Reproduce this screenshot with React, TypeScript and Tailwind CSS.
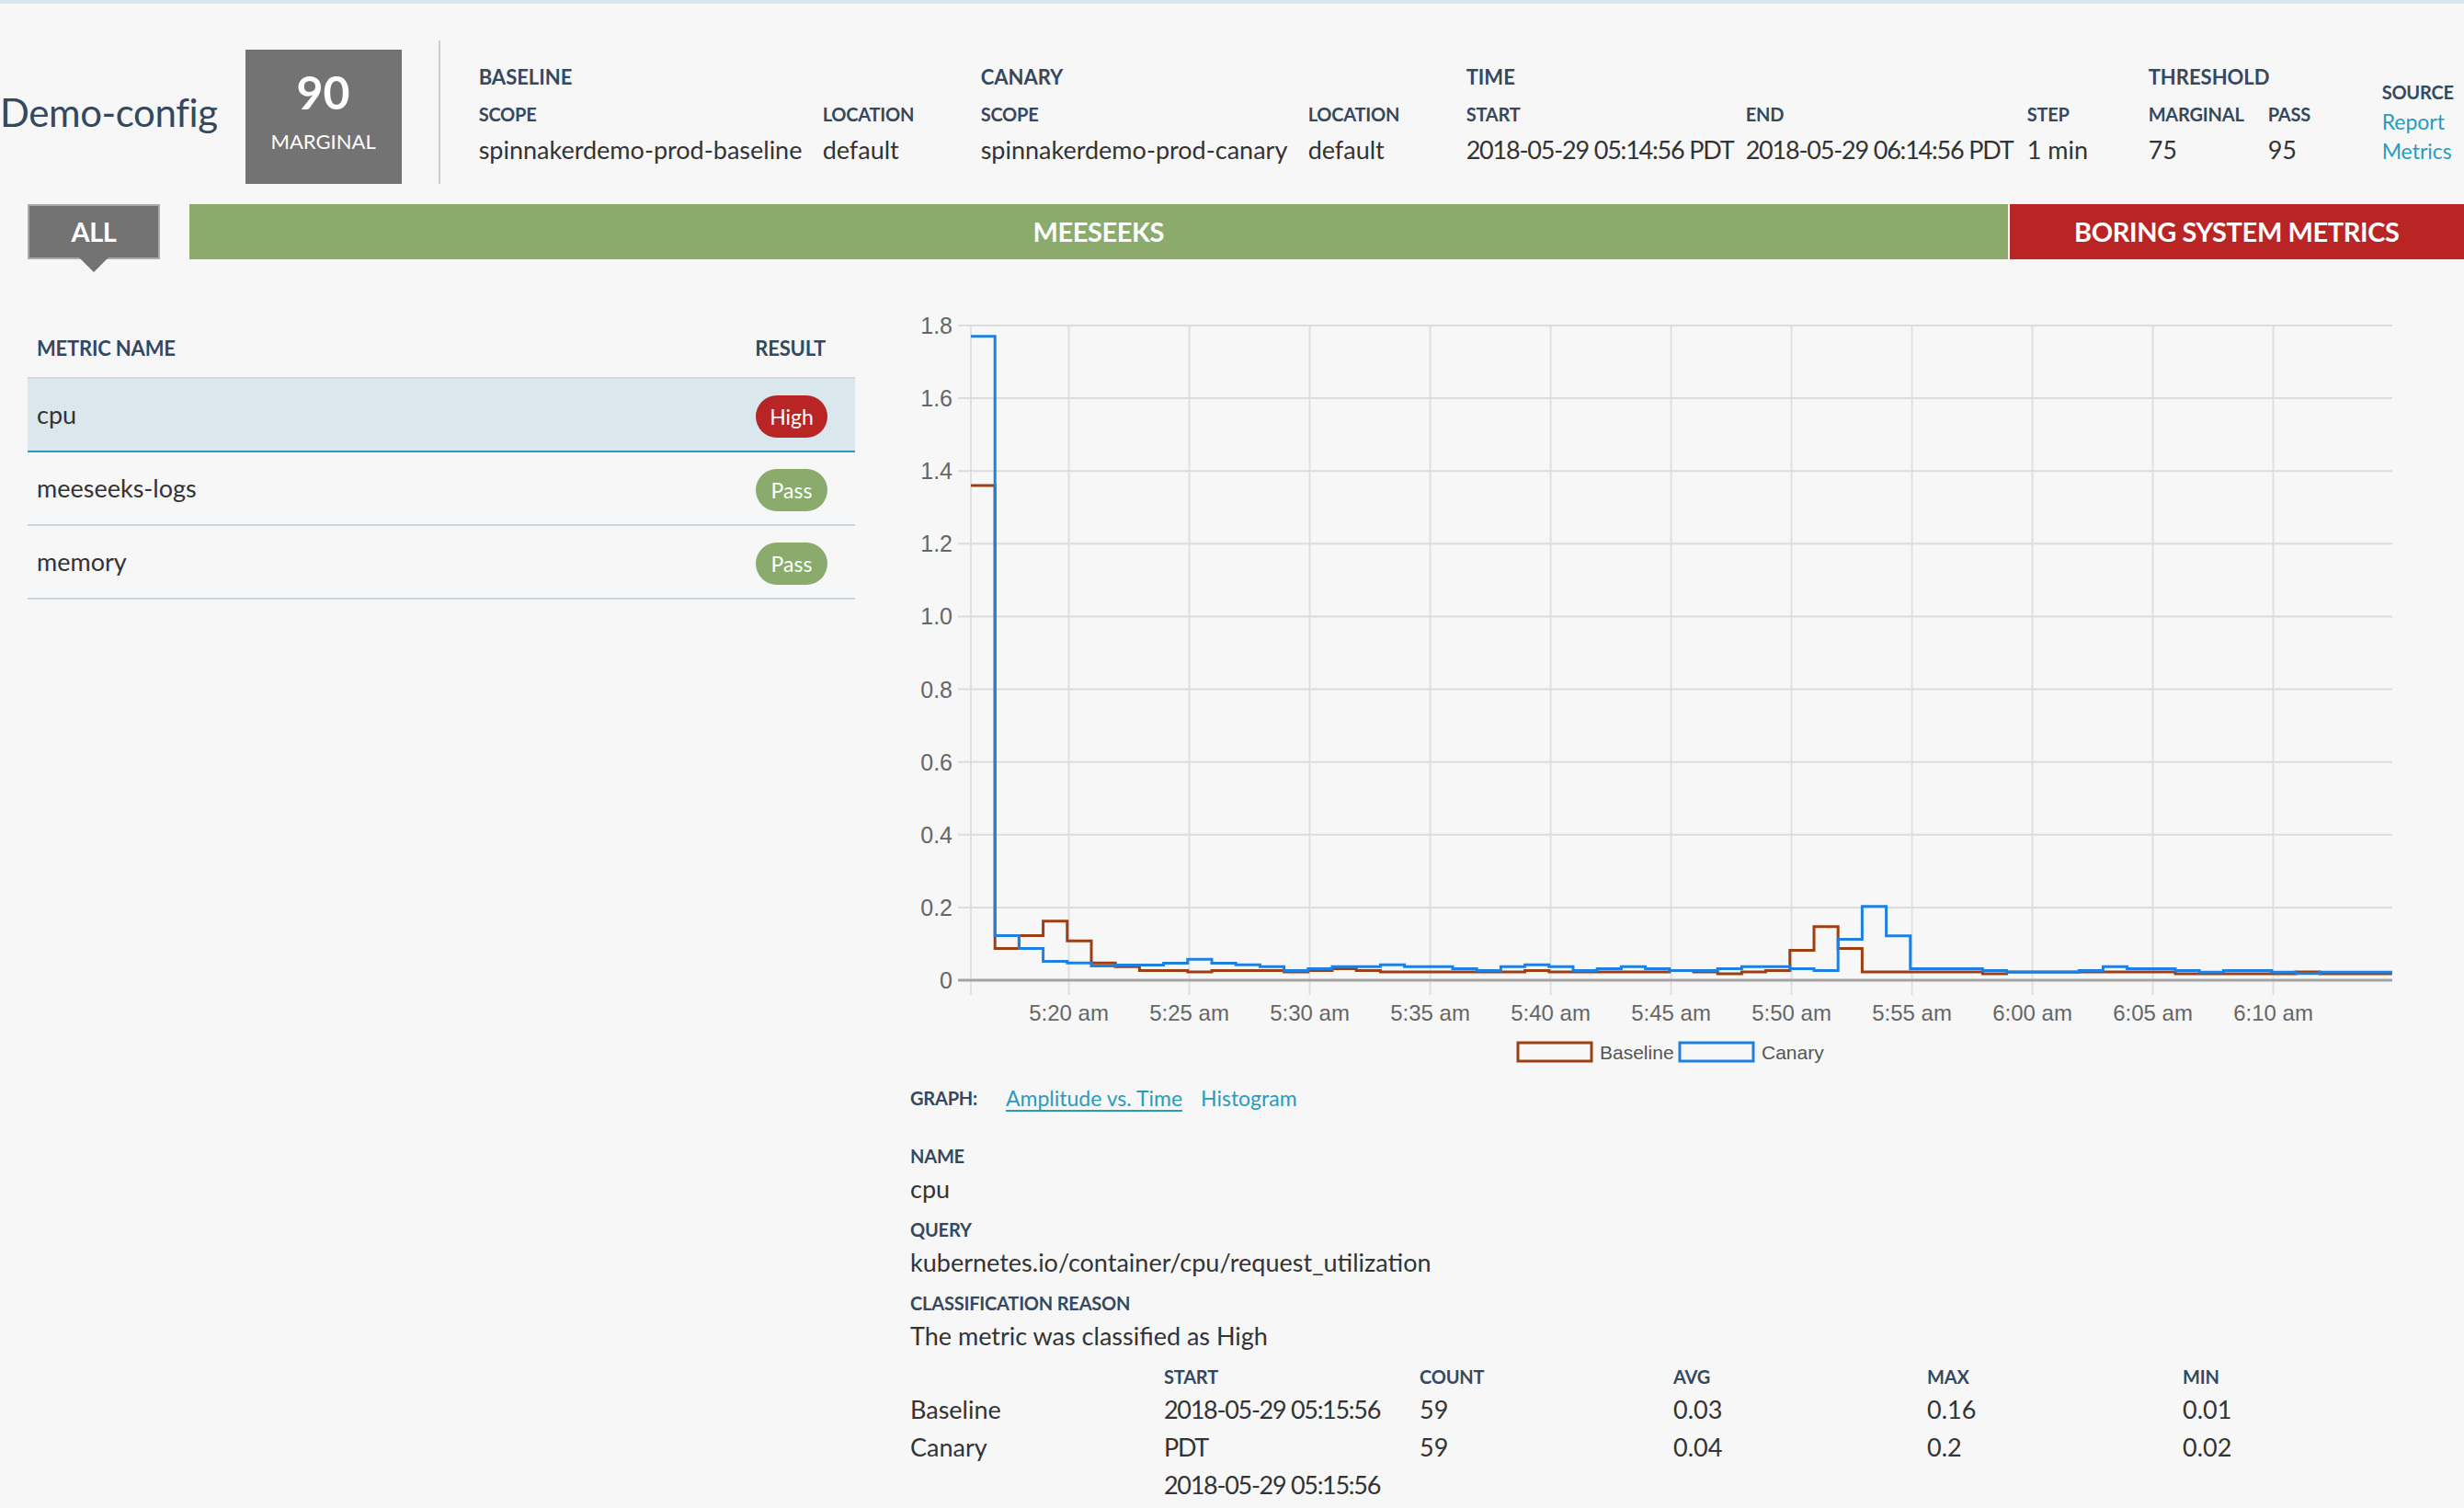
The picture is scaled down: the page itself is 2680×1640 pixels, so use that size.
import React from "react";

// one value per minute, starting 05:15:56
const baseline = [
  1.36, 0.0875, 0.1225, 0.1625, 0.108, 0.0475, 0.0375, 0.027, 0.027, 0.0225,
  0.027, 0.027, 0.027, 0.0225, 0.027, 0.032, 0.027, 0.0225, 0.0225, 0.0225,
  0.0225, 0.0225, 0.0225, 0.027, 0.0225, 0.0225, 0.0225, 0.0225, 0.0225, 0.027,
  0.0225, 0.0175, 0.0225, 0.027, 0.082, 0.147, 0.0875, 0.0225, 0.0225, 0.0225,
  0.0225, 0.0225, 0.0175, 0.0225, 0.0225, 0.0225, 0.0225, 0.0225, 0.0225, 0.0225,
  0.0175, 0.0175, 0.0175, 0.0175, 0.0175, 0.0225, 0.0175, 0.0175, 0.0175,
];

const canary = [
  1.77, 0.1225, 0.0875, 0.052, 0.0475, 0.039, 0.042, 0.042, 0.047, 0.0575,
  0.047, 0.0425, 0.0375, 0.027, 0.032, 0.0375, 0.0375, 0.0425, 0.0375, 0.0375,
  0.032, 0.027, 0.0375, 0.0425, 0.0375, 0.027, 0.032, 0.0375, 0.032, 0.027,
  0.027, 0.032, 0.0375, 0.0375, 0.032, 0.027, 0.112, 0.2025, 0.122, 0.032,
  0.032, 0.032, 0.027, 0.022, 0.022, 0.022, 0.027, 0.0375, 0.032, 0.032,
  0.027, 0.022, 0.027, 0.027, 0.022, 0.018, 0.022, 0.022, 0.022,
];

const ticks = ["5:20 am", "5:25 am", "5:30 am", "5:35 am", "5:40 am", "5:45 am", "5:50 am", "5:55 am", "6:00 am", "6:05 am", "6:10 am"];
const yTicks = [1.8, 1.6, 1.4, 1.2, 1.0, 0.8, 0.6, 0.4, 0.2];

const metrics = [
  { name: "cpu", result: "High", selected: true },
  { name: "meeseeks-logs", result: "Pass", selected: false },
  { name: "memory", result: "Pass", selected: false },
];

// small caps-style field labels
const Label = ({ children, className = "" }: { children: React.ReactNode; className?: string }) => (
  <div className={`text-[10px] font-bold uppercase tracking-[-0.1px] text-[#34495e] ${className}`}>{children}</div>
);

const Group = ({ children, className = "" }: { children: React.ReactNode; className?: string }) => (
  <div className={`text-[11px] font-bold uppercase leading-none text-[#34495e] ${className}`}>{children}</div>
);

const Value = ({ children, num = false }: { children: React.ReactNode; num?: boolean }) => (
  <div className={`text-[13.5px] leading-none whitespace-nowrap text-[#333] ${num ? "tracking-[-0.6px]" : ""}`}>{children}</div>
);

const Chart = () => {
  const x0 = 33;
  const step = 13.1;
  const zeroY = 368;
  const k = 197.8;
  const y = (v: number) => zeroY - v * k;
  const path = (vals: number[]) => {
    let d = `M${x0} ${y(vals[0]).toFixed(1)}`;
    vals.forEach((_, i) => {
      d += ` H${(x0 + (i + 1) * step).toFixed(1)}`;
      if (i + 1 < vals.length) d += ` V${y(vals[i + 1]).toFixed(1)}`;
    });
    return d;
  };
  const font = "Liberation Sans, Arial, sans-serif";

  return (
    <svg width="830" height="420" viewBox="0 0 830 420" fontFamily={font}>
      {/* vertical grid */}
      <line x1={x0} y1={y(1.8)} x2={x0} y2={zeroY + 8} stroke="#e0e0e0" strokeWidth="1" />
      {ticks.map((t, j) => {
        const x = x0 + (4.0667 + 5 * j) * step;
        return (
          <g key={t}>
            <line x1={x} y1={y(1.8)} x2={x} y2={zeroY + 8} stroke="#e0e0e0" strokeWidth="1" />
            <text x={x} y="390" textAnchor="middle" fontSize="12" fill="#666">
              {t}
            </text>
          </g>
        );
      })}
      {/* horizontal grid */}
      {yTicks.map((v) => (
        <g key={v}>
          <line x1="26" y1={y(v)} x2="806" y2={y(v)} stroke="#dcdcdc" strokeWidth="1" />
          <text x="23" y={y(v) + 4.5} textAnchor="end" fontSize="12.5" fill="#666">
            {v.toFixed(1)}
          </text>
        </g>
      ))}
      <line x1="26" y1={zeroY} x2="806" y2={zeroY} stroke="#a3a3a3" strokeWidth="1.5" />
      <text x="23" y={zeroY + 4.5} textAnchor="end" fontSize="12.5" fill="#666">
        0
      </text>

      <path d={path(baseline)} fill="none" stroke="#9c3f12" strokeWidth="1.5" />
      <path d={path(canary)} fill="none" stroke="#2080e0" strokeWidth="1.5" />

      {/* legend */}
      <rect x="330.5" y="402" width="40" height="10" fill="none" stroke="#9c3f12" strokeWidth="1.5" />
      <text x="375" y="411" fontSize="10.5" fill="#555">
        Baseline
      </text>
      <rect x="418.5" y="402" width="40" height="10" fill="none" stroke="#2080e0" strokeWidth="1.5" />
      <text x="463" y="411" fontSize="10.5" fill="#555">
        Canary
      </text>
    </svg>
  );
};

export default function App() {
  return (
    <div className="w-[1340px] h-[820px] overflow-hidden bg-[#f7f7f7] [zoom:2] [font-family:Lato,sans-serif] border-t-2 border-[#d9e7ee]">
      {/* header */}
      <div className="flex h-[78px] mt-[20px]">
        <div className="self-center text-[21px] leading-none text-[#34495e] tracking-[-0.2px]">Demo-config</div>
        <div className="self-end ml-[15px] w-[85px] h-[73px] bg-[#737373] flex flex-col items-center pt-[11px]">
          <div className="text-[25px] leading-[24px] font-bold text-white">90</div>
          <div className="mt-[7px] text-[11px] leading-[16px] text-white">MARGINAL</div>
        </div>
        <div className="ml-[20px] w-px bg-[#cccccc]" />
        <div className="ml-[21px] pt-[10px] self-start grid grid-cols-[187px_86px_178px_86px_152px_153px_66px_65px_62px] grid-rows-[20px_20px_18px] items-center">
          <Group className="col-span-2">Baseline</Group>
          <Group className="col-span-2">Canary</Group>
          <Group className="col-span-3">Time</Group>
          <Group className="col-span-2">Threshold</Group>

          <Label className="leading-none">Scope</Label>
          <Label className="leading-none">Location</Label>
          <Label className="leading-none">Scope</Label>
          <Label className="leading-none">Location</Label>
          <Label className="leading-none">Start</Label>
          <Label className="leading-none">End</Label>
          <Label className="leading-none">Step</Label>
          <Label className="leading-none">Marginal</Label>
          <Label className="leading-none">Pass</Label>

          <Value>spinnakerdemo-prod-baseline</Value>
          <Value>default</Value>
          <Value>spinnakerdemo-prod-canary</Value>
          <Value>default</Value>
          <Value num>2018-05-29 05:14:56 PDT</Value>
          <Value num>2018-05-29 06:14:56 PDT</Value>
          <Value>1 min</Value>
          <Value>75</Value>
          <Value>95</Value>
        </div>
        <div className="self-start pt-[20px] flex flex-col">
          <Label className="h-[16px] flex items-center">Source</Label>
          <a className="h-[16px] flex items-center text-[11.5px] text-[#2a9bbd]">Report</a>
          <a className="h-[16px] flex items-center text-[11.5px] text-[#2a9bbd]">Metrics</a>
        </div>
      </div>

      {/* group tabs */}
      <div className="flex h-[30px] mt-[11px] pl-[15px] text-[14.5px] font-bold text-white tracking-[-0.2px]">
        <div className="relative w-[72px] bg-[#737373] border border-[#ababab] flex items-center justify-center">
          ALL
          <div className="absolute left-1/2 -translate-x-1/2 top-full w-0 h-0 border-l-[8px] border-r-[8px] border-t-[8px] border-l-transparent border-r-transparent border-t-[#737373]" />
        </div>
        <div className="ml-[16px] flex-[4] bg-[#8aab6c] flex items-center justify-center">MEESEEKS</div>
        <div className="ml-px flex-[1] bg-[#b92525] flex items-center justify-center">BORING SYSTEM METRICS</div>
      </div>

      {/* main */}
      <div className="flex gap-[30px] px-[15px] mt-[24px]">
        <div className="w-[450px] pt-[7px]">
          <div className="h-[34px] flex items-center justify-between pl-[5px] pr-[16px] border-b border-[#cfd9de] pt-[2px]">
            <Label className="text-[11px] leading-none">Metric name</Label>
            <Label className="text-[11px] leading-none">Result</Label>
          </div>
          {metrics.map((m) => (
            <div
              key={m.name}
              className={`h-[40px] flex items-center justify-between pl-[5px] pr-[15px] border-b ${
                m.selected ? "bg-[#dae8ee] border-[#2a9bbd]" : "border-[#c6d6de]"
              }`}
            >
              <span className="text-[13.5px] text-[#333]">{m.name}</span>
              <span
                className={`mt-[2px] w-[39px] h-[23px] rounded-full flex items-center justify-center text-[11.5px] text-white ${
                  m.result === "High" ? "bg-[#b92525]" : "bg-[#8aab6c]"
                }`}
              >
                {m.result}
              </span>
            </div>
          ))}
        </div>

        <div className="flex-1">
          <Chart />

          <div className="flex items-center h-[20px] mt-[2px]">
            <Label className="w-[52px] leading-none">Graph:</Label>
            <a className="text-[11.5px] text-[#2a9bbd] underline underline-offset-2">Amplitude vs. Time</a>
            <a className="ml-[10px] text-[11.5px] text-[#2a9bbd]">Histogram</a>
          </div>

          <div className="mt-[11px] flex flex-col">
            <Label className="h-[17px] pt-[4px] flex items-center">Name</Label>
            <div className="h-[23px] flex items-center text-[13.5px] text-[#333]">cpu</div>
            <Label className="h-[17px] pt-[4px] flex items-center">Query</Label>
            <div className="h-[23px] flex items-center text-[13.5px] text-[#333]">kubernetes.io/container/cpu/request_utilization</div>
            <Label className="h-[17px] pt-[4px] flex items-center">Classification reason</Label>
            <div className="h-[23px] flex items-center text-[13.5px] text-[#333]">The metric was classified as High</div>
          </div>

          <div className="flex text-[13.5px] text-[#333]">
            <div className="w-[138px]">
              <div className="h-[18px]" />
              <div className="leading-[20.5px]">Baseline</div>
              <div className="leading-[20.5px]">Canary</div>
            </div>
            <div className="w-[139px]">
              <Label className="h-[18px] pt-[3px] flex items-center">Start</Label>
              <div className="leading-[20.5px] pr-[8px] tracking-[-0.65px]">2018-05-29 05:15:56 PDT</div>
              <div className="leading-[20.5px] pr-[8px] tracking-[-0.65px]">2018-05-29 05:15:56 PDT</div>
            </div>
            <div className="w-[138px]">
              <Label className="h-[18px] pt-[3px] flex items-center">Count</Label>
              <div className="leading-[20.5px]">59</div>
              <div className="leading-[20.5px]">59</div>
            </div>
            <div className="w-[138px]">
              <Label className="h-[18px] pt-[3px] flex items-center">Avg</Label>
              <div className="leading-[20.5px]">0.03</div>
              <div className="leading-[20.5px]">0.04</div>
            </div>
            <div className="w-[139px]">
              <Label className="h-[18px] pt-[3px] flex items-center">Max</Label>
              <div className="leading-[20.5px]">0.16</div>
              <div className="leading-[20.5px]">0.2</div>
            </div>
            <div className="w-[138px]">
              <Label className="h-[18px] pt-[3px] flex items-center">Min</Label>
              <div className="leading-[20.5px]">0.01</div>
              <div className="leading-[20.5px]">0.02</div>
            </div>
          </div>
        </div>
      </div>
    </div>
  );
}
